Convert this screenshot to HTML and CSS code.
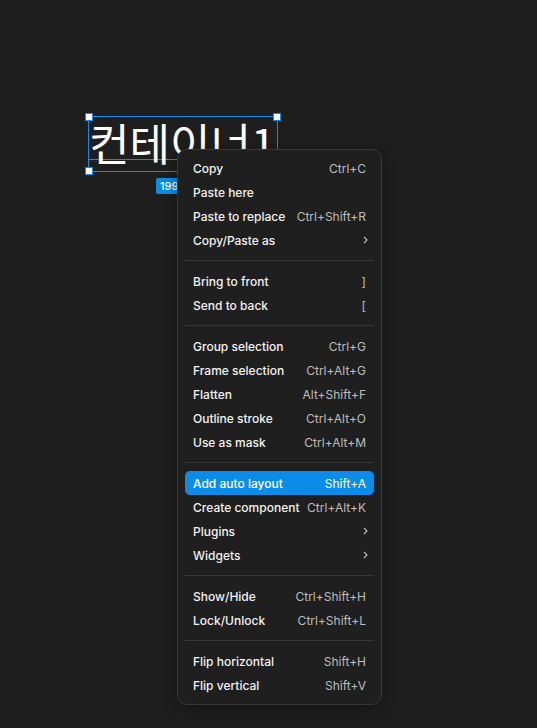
FILE: index.html
```html
<!DOCTYPE html>
<html lang="ko">
<head>
<meta charset="utf-8">
<link rel="stylesheet" href="styles.css">
</head>
<body>
<div class="canvas">
  <div class="selection">
    <div class="text-node">컨테이너1</div>
    <div class="baseline"></div>
    <span class="handle h-tl"></span>
    <span class="handle h-tr"></span>
    <span class="handle h-bl"></span>
    <span class="handle h-br"></span>
  </div>
  <div class="size-badge">199 × 55</div>

  <div class="menu">
    <div class="group">
      <div class="item"><span class="label">Copy</span><span class="key">Ctrl+C</span></div>
      <div class="item"><span class="label">Paste here</span><span class="key"></span></div>
      <div class="item"><span class="label">Paste to replace</span><span class="key">Ctrl+Shift+R</span></div>
      <div class="item"><span class="label">Copy/Paste as</span><span class="key"><svg class="chev" width="5" height="8" viewBox="0 0 5 8"><path d="M1 1l3 3-3 3" fill="none" stroke="currentColor" stroke-width="1.1"/></svg></span></div>
    </div>
    <div class="sep"></div>
    <div class="group">
      <div class="item"><span class="label">Bring to front</span><span class="key">]</span></div>
      <div class="item"><span class="label">Send to back</span><span class="key">[</span></div>
    </div>
    <div class="sep"></div>
    <div class="group">
      <div class="item"><span class="label">Group selection</span><span class="key">Ctrl+G</span></div>
      <div class="item"><span class="label">Frame selection</span><span class="key">Ctrl+Alt+G</span></div>
      <div class="item"><span class="label">Flatten</span><span class="key">Alt+Shift+F</span></div>
      <div class="item"><span class="label">Outline stroke</span><span class="key">Ctrl+Alt+O</span></div>
      <div class="item"><span class="label">Use as mask</span><span class="key">Ctrl+Alt+M</span></div>
    </div>
    <div class="sep"></div>
    <div class="group">
      <div class="item active"><span class="label">Add auto layout</span><span class="key">Shift+A</span></div>
      <div class="item"><span class="label">Create component</span><span class="key">Ctrl+Alt+K</span></div>
      <div class="item"><span class="label">Plugins</span><span class="key"><svg class="chev" width="5" height="8" viewBox="0 0 5 8"><path d="M1 1l3 3-3 3" fill="none" stroke="currentColor" stroke-width="1.1"/></svg></span></div>
      <div class="item"><span class="label">Widgets</span><span class="key"><svg class="chev" width="5" height="8" viewBox="0 0 5 8"><path d="M1 1l3 3-3 3" fill="none" stroke="currentColor" stroke-width="1.1"/></svg></span></div>
    </div>
    <div class="sep"></div>
    <div class="group">
      <div class="item"><span class="label">Show/Hide</span><span class="key">Ctrl+Shift+H</span></div>
      <div class="item"><span class="label">Lock/Unlock</span><span class="key">Ctrl+Shift+L</span></div>
    </div>
    <div class="sep"></div>
    <div class="group">
      <div class="item"><span class="label">Flip horizontal</span><span class="key">Shift+H</span></div>
      <div class="item"><span class="label">Flip vertical</span><span class="key">Shift+V</span></div>
    </div>
  </div>
</div>
</body>
</html>
```

FILE: styles.css
```css
html, body {
  margin: 0;
  padding: 0;
  background: #1e1e1e;
}
.canvas {
  position: relative;
  width: 537px;
  height: 728px;
  overflow: hidden;
  background: #1e1e1e;
  font-family: Inter, "Noto Sans", sans-serif;
}
.selection {
  position: absolute;
  left: 88px;
  top: 116px;
  width: 188px;
  height: 54px;
  border: 1px solid #0c8ce9;
}
.text-node {
  position: absolute;
  left: 0px;
  top: 3px;
  font-family: "Noto Sans CJK KR", sans-serif;
  font-size: 44px;
  line-height: 44px;
  font-weight: 400;
  color: #ffffff;
  white-space: nowrap;
  z-index: 2;
}
.baseline {
  position: absolute;
  left: 0;
  right: 0;
  top: 42px;
  height: 1px;
  background: #0c8ce9;
  z-index: 1;
}
.handle {
  position: absolute;
  width: 6px;
  height: 6px;
  background: #ffffff;
  border: 1px solid #0c8ce9;
  z-index: 3;
}
.h-tl { left: -4px; top: -4px; }
.h-tr { right: -4px; top: -4px; }
.h-bl { left: -4px; bottom: -4px; }
.h-br { right: -4px; bottom: -4px; }
.size-badge {
  position: absolute;
  left: 156px;
  top: 178px;
  height: 16px;
  padding: 0 4px;
  border-radius: 2px;
  background: #0c8ce9;
  color: #ffffff;
  font-size: 11px;
  line-height: 16px;
  font-weight: 500;
}
.menu {
  position: absolute;
  left: 177px;
  top: 149px;
  width: 203px;
  padding: 6px 0 7px;
  background: #1f1f1f;
  border: 1px solid #383838;
  border-radius: 10px;
  box-shadow: 0 4px 14px rgba(0,0,0,0.35);
  display: flex;
  flex-direction: column;
  z-index: 10;
}
.group {
  display: flex;
  flex-direction: column;
}
.item {
  display: flex;
  align-items: center;
  justify-content: space-between;
  height: 24px;
  margin: 0 7px;
  padding: 0 8px;
  border-radius: 5px;
  font-size: 12px;
  font-weight: 500;
  color: #f2f2f2;
}
.item .key {
  color: #bdbdbd;
  font-weight: 400;
  display: flex;
  align-items: center;
}
.item.active {
  background: #0c8ce9;
  color: #ffffff;
}
.item.active .key {
  color: #ffffff;
}
.chev {
  margin-right: -2px;
}
.sep {
  height: 1px;
  margin: 8px 7px;
  background: #383838;
}
```
